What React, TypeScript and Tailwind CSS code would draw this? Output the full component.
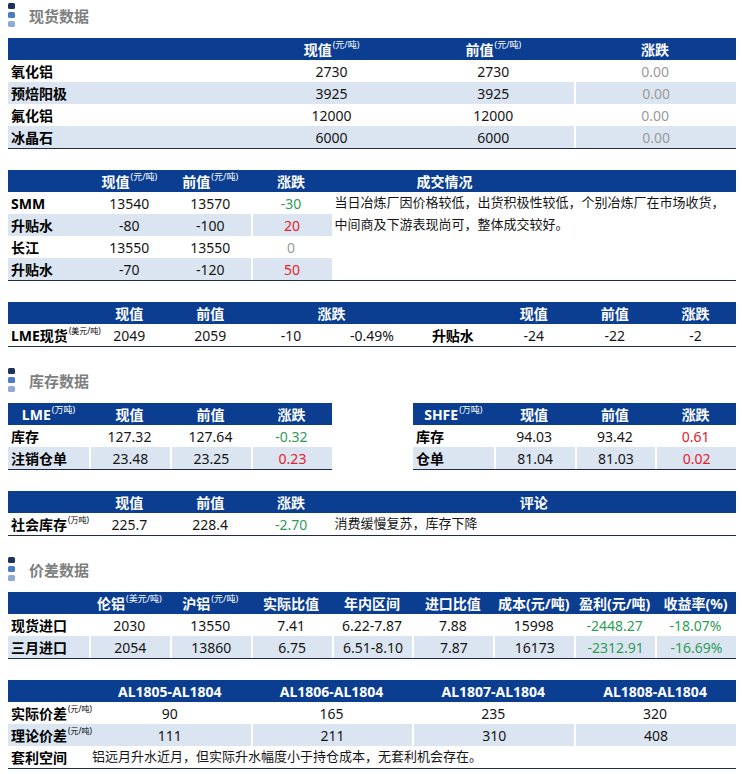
import React from 'react';

type Cell = {
  t?: React.ReactNode;
  s?: number;
  bg?: boolean;
  sep?: boolean;
  c?: string;
  b?: boolean;
  l?: boolean;
  p?: boolean;
  cls?: string;
};

const span: Record<number, string> = {
  1: 'col-span-1',
  2: 'col-span-2',
  3: 'col-span-3',
  4: 'col-span-4',
  5: 'col-span-5',
  6: 'col-span-6',
  7: 'col-span-7',
  8: 'col-span-8',
  9: 'col-span-9',
};

const G = 'text-[#2e9d58]';
const R = 'text-[#e2202f]';
const N = 'text-[#9a9a9a]';

// superscript unit in headers / labels
const Sup = ({ children, small }: { children: React.ReactNode; small?: boolean }) => (
  <sup className={small ? 'text-[8px] font-normal ml-px' : 'text-[9px] font-normal ml-px'}>{children}</sup>
);

function Row({ cells, head, grid }: { cells: Cell[]; head?: boolean; grid: string }) {
  return (
    <div
      className={`grid ${grid} h-[22px] ${
        head ? 'bg-[#0b3e91] text-white font-bold text-[14px]' : 'text-[14px] text-[#151515]'
      }`}
    >
      {cells.map((c, i) => (
        <div
          key={i}
          className={[
            span[c.s ?? 1],
            'flex items-center whitespace-nowrap min-w-0',
            c.l ? 'justify-start pl-[3px]' : 'justify-center',
            c.bg ? 'bg-[#dbe5f1]' : '',
            c.sep ? 'border-l-2 border-white' : '',
            c.b ? 'font-bold text-black' : '',
            c.p ? 'text-[13px]' : '',
            c.c ?? '',
            c.cls ?? '',
          ].join(' ')}
        >
          {c.t}
        </div>
      ))}
    </div>
  );
}

function Table({ rows, grid = 'grid-cols-9', w = 'w-[728px]', cls = '' }: { rows: Cell[][]; grid?: string; w?: string; cls?: string }) {
  return (
    <div className={`${w} border-b border-[#1d2c4c] ${cls}`}>
      {rows.map((r, i) => (
        <Row key={i} cells={r} head={i === 0} grid={grid} />
      ))}
    </div>
  );
}

function Title({ text, cls = '' }: { text: string; cls?: string }) {
  return (
    <div className={`h-[37px] flex items-start ${cls}`}>
      <div className="flex flex-col gap-[3px] pt-[2px]">
        <div className="w-[7px] h-[6px] rounded-[1.5px] bg-[#1c3259]" />
        <div className="w-[7px] h-[6px] rounded-[1.5px] bg-[#4a7cc4]" />
        <div className="w-[7px] h-[6px] rounded-[1.5px] bg-[#8faad8]" />
      </div>
      <div className="ml-[14px] pt-[5px] text-[15px] leading-[20px] font-bold text-[#7f7f7f]">{text}</div>
    </div>
  );
}

const xz = (
  <>
    现值<Sup>(元/吨)</Sup>
  </>
);
const qz = (
  <>
    前值<Sup>(元/吨)</Sup>
  </>
);

const t1: Cell[][] = [
  [{ s: 3 }, { t: xz, s: 2 }, { t: qz, s: 2 }, { t: '涨跌', s: 2 }],
  [{ t: '氧化铝', s: 3, l: true, b: true }, { t: '2730', s: 2 }, { t: '2730', s: 2 }, { t: '0.00', s: 2, c: N }],
  [{ t: '预焙阳极', s: 3, l: true, b: true, bg: true }, { t: '3925', s: 2, bg: true }, { t: '3925', s: 2, bg: true }, { t: '0.00', s: 2, c: N, bg: true, sep: true }],
  [{ t: '氟化铝', s: 3, l: true, b: true }, { t: '12000', s: 2 }, { t: '12000', s: 2 }, { t: '0.00', s: 2, c: N }],
  [{ t: '冰晶石', s: 3, l: true, b: true, bg: true }, { t: '6000', s: 2, bg: true }, { t: '6000', s: 2, bg: true }, { t: '0.00', s: 2, c: N, bg: true, sep: true }],
];

const t2: Cell[][] = [
  [{}, { t: xz }, { t: qz }, { t: '涨跌' }, { t: '成交情况', s: 5, l: true, cls: 'pl-[85px]' }],
  [{ t: 'SMM', l: true, b: true }, { t: '13540' }, { t: '13570' }, { t: '-30', c: G }, { t: '当日冶炼厂因价格较低，出货积极性较低，个别冶炼厂在市场收货，', s: 5, l: true, p: true }],
  [{ t: '升贴水', l: true, b: true, bg: true }, { t: '-80', bg: true }, { t: '-100', bg: true }, { t: '20', c: R, bg: true, sep: true }, { t: '中间商及下游表现尚可，整体成交较好。', s: 5, l: true, p: true }],
  [{ t: '长江', l: true, cls: 'font-semibold text-black' }, { t: '13550' }, { t: '13550' }, { t: '0', c: N }, { s: 5 }],
  [{ t: '升贴水', l: true, b: true, bg: true }, { t: '-70', bg: true }, { t: '-120', bg: true }, { t: '50', c: R, bg: true, sep: true }, { s: 5 }],
];

const t3: Cell[][] = [
  [{}, { t: '现值' }, { t: '前值' }, { t: '涨跌', s: 2 }, {}, { t: '现值' }, { t: '前值' }, { t: '涨跌' }],
  [
    { t: <>LME现货<Sup small>(美元/吨)</Sup></>, l: true, b: true },
    { t: '2049' },
    { t: '2059' },
    { t: '-10' },
    { t: '-0.49%' },
    { t: '升贴水', b: true },
    { t: '-24' },
    { t: '-22' },
    { t: '-2' },
  ],
];

const t4: Cell[][] = [
  [{ t: <>LME<Sup>(万吨)</Sup></> }, { t: '现值' }, { t: '前值' }, { t: '涨跌' }],
  [{ t: '库存', l: true, b: true }, { t: '127.32' }, { t: '127.64' }, { t: '-0.32', c: G }],
  [{ t: '注销仓单', l: true, b: true, bg: true }, { t: '23.48', bg: true, sep: true }, { t: '23.25', bg: true, sep: true }, { t: '0.23', c: R, bg: true, sep: true }],
];

const t5: Cell[][] = [
  [{ t: <>SHFE<Sup>(万吨)</Sup></> }, { t: '现值' }, { t: '前值' }, { t: '涨跌' }],
  [{ t: '库存', l: true, b: true }, { t: '94.03' }, { t: '93.42' }, { t: '0.61', c: R }],
  [{ t: '仓单', l: true, b: true, bg: true }, { t: '81.04', bg: true, sep: true }, { t: '81.03', bg: true, sep: true }, { t: '0.02', c: R, bg: true, sep: true }],
];

const t6: Cell[][] = [
  [{}, { t: '现值' }, { t: '前值' }, { t: '涨跌' }, { t: '评论', s: 5 }],
  [
    { t: <>社会库存<Sup small>(万吨)</Sup></>, l: true, b: true },
    { t: '225.7' },
    { t: '228.4' },
    { t: '-2.70', c: G },
    { t: '消费缓慢复苏，库存下降', s: 5, l: true, p: true },
  ],
];

const t7: Cell[][] = [
  [
    {},
    { t: <>伦铝<Sup>(美元/吨)</Sup></> },
    { t: <>沪铝<Sup>(元/吨)</Sup></> },
    { t: '实际比值' },
    { t: '年内区间' },
    { t: '进口比值' },
    { t: '成本(元/吨)' },
    { t: '盈利(元/吨)' },
    { t: '收益率(%)' },
  ],
  [
    { t: '现货进口', l: true, b: true },
    { t: '2030' },
    { t: '13550' },
    { t: '7.41' },
    { t: '6.22-7.87' },
    { t: '7.88' },
    { t: '15998' },
    { t: '-2448.27', c: G },
    { t: '-18.07%', c: G },
  ],
  [
    { t: '三月进口', l: true, b: true, bg: true },
    { t: '2054', bg: true, sep: true },
    { t: '13860', bg: true, sep: true },
    { t: '6.75', bg: true, sep: true },
    { t: '6.51-8.10', bg: true, sep: true },
    { t: '7.87', bg: true, sep: true },
    { t: '16173', bg: true, sep: true },
    { t: '-2312.91', c: G, bg: true, sep: true },
    { t: '-16.69%', c: G, bg: true, sep: true },
  ],
];

const t8: Cell[][] = [
  [{}, { t: 'AL1805-AL1804', s: 2 }, { t: 'AL1806-AL1804', s: 2 }, { t: 'AL1807-AL1804', s: 2 }, { t: 'AL1808-AL1804', s: 2 }],
  [
    { t: <>实际价差<Sup small>(元/吨)</Sup></>, l: true, b: true },
    { t: '90', s: 2 },
    { t: '165', s: 2 },
    { t: '235', s: 2 },
    { t: '320', s: 2 },
  ],
  [
    { t: <>理论价差<Sup small>(元/吨)</Sup></>, l: true, b: true, bg: true },
    { t: '111', s: 2, bg: true },
    { t: '211', s: 2, bg: true, sep: true },
    { t: '310', s: 2, bg: true, sep: true },
    { t: '408', s: 2, bg: true, sep: true },
  ],
  [
    { t: '套利空间', l: true, b: true },
    { t: '铝远月升水近月，但实际升水幅度小于持仓成本，无套利机会存在。', s: 8, l: true, p: true },
  ],
];

export default function App() {
  return (
    <div className="w-[742px] min-h-[774px] bg-white pl-[8px] pt-px font-['Noto_Sans','Noto_Sans_CJK_SC',sans-serif]">
      <Title text="现货数据" />
      <Table rows={t1} />
      <Table rows={t2} cls="mt-[21px]" />
      <Table rows={t3} cls="mt-[21px]" />

      <Title text="库存数据" cls="mt-[19px]" />
      <div className="w-[728px] flex justify-between">
        <Table rows={t4} grid="grid-cols-4" w="w-[324px]" />
        <Table rows={t5} grid="grid-cols-4" w="w-[323px]" />
      </div>
      <Table rows={t6} cls="mt-[21px]" />

      <Title text="价差数据" cls="mt-[19px]" />
      <Table rows={t7} />
      <Table rows={t8} cls="mt-[21px]" />
    </div>
  );
}
